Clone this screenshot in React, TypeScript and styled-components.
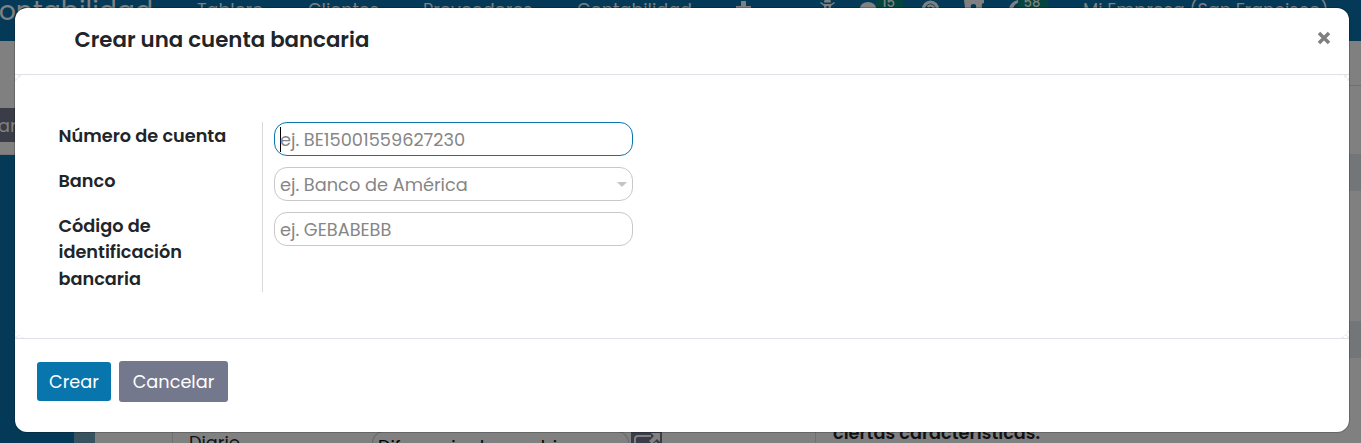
import React from "react";
import styled, { createGlobalStyle } from "styled-components";

const GlobalStyle = createGlobalStyle`
  * { box-sizing: border-box; }
  html, body { margin: 0; height: 100%; overflow: hidden; }
  body { font-family: Poppins, Inter, "Noto Sans", sans-serif; font-size: 17.7px; color: #212529; }
`;

const Page = styled.div`
  position: relative;
  width: 1361px;
  height: 443px;
  overflow: hidden;
  background: #808080;
  display: flex;
  flex-direction: column;
`;

const Navbar = styled.nav`
  height: 41px;
  flex: none;
  display: flex;
  align-items: flex-start;
  background: #043a57;
  color: #808080;
  font-size: 17.6px;
`;

const Brand = styled.div`
  width: 197px;
  margin-left: -22px;
  margin-right: 22px;
  flex: none;
  font-size: 26.8px;
  line-height: 36px;
  margin-top: -7px;
  white-space: nowrap;
`;

const NavItem = styled.div<{ $w: number }>`
  width: ${(p) => p.$w}px;
  flex: none;
  line-height: 20px;
  white-space: nowrap;
`;

const NavIcon = styled.svg<{ $w: number }>`
  width: ${(p) => p.$w}px;
  height: 24px;
  flex: none;
`;

const Badge = styled.div<{ $w: number; $gap: number }>`
  width: ${(p) => p.$w}px;
  margin-right: ${(p) => p.$gap}px;
  height: 9px;
  flex: none;
  padding-right: 2px;
  background: #04443f;
  font-size: 13.2px;
  font-weight: 500;
  line-height: 5px;
  text-align: center;
`;

const ControlPanel = styled.div`
  height: 114px;
  flex: none;
  display: flex;
  justify-content: space-between;
  align-items: flex-start;
  padding-top: 67px;
  border-bottom: 1px solid #747474;
`;

const EditButton = styled.div`
  width: 40px;
  height: 34px;
  margin-left: -2px;
  line-height: 35px;
  background: #3a3c47;
  color: #808080;
`;

const PanelRule = styled.div`
  width: 20px;
  height: 1px;
  margin-top: -23px;
  background: #707070;
`;

const Content = styled.div`
  flex: 1;
  display: flex;
`;

const Sidebar = styled.div`
  width: 95px;
  background: #043a57;
  border-right: 21px solid #395260;
`;

const Sheet = styled.div`
  width: 1246px;
  display: flex;
  align-items: flex-end;
  padding-left: 77px;
`;

const SheetLabel = styled.div`
  width: 200px;
  height: 12px;
  padding-left: 16px;
  border-left: 1px solid #707070;
  line-height: 24px;
  color: #101214;
`;

const SheetField = styled.div`
  width: 257px;
  height: 12px;
  border: 1px solid #686868;
  border-bottom: 0;
  border-radius: 14px 14px 0 0;
  padding-left: 5px;
  line-height: 29px;
  color: #000;
  white-space: nowrap;
  overflow: hidden;
`;

const LinkButton = styled.div`
  width: 31px;
  height: 12px;
  margin-left: 2px;
  background: #3a3c47;
  svg { display: block; }
`;

const SheetNote = styled.div`
  height: 12px;
  margin-left: 153px;
  padding-left: 17px;
  border-left: 1px solid #707070;
  line-height: 3px;
  font-weight: 600;
  color: #101214;
  white-space: nowrap;
`;

const Rows = styled.div`
  width: 20px;
  margin-top: -1px;
  display: flex;
  flex-direction: column;
  gap: 130px;
`;

const GroupBand = styled.div`
  height: 37px;
  background: #737678;
`;

const Dialog = styled.section`
  position: absolute;
  left: 15px;
  top: 8px;
  width: 1334px;
  height: 424px;
  border-radius: 12px;
  background: #fff;
  box-shadow: 0 0 0 1px rgba(0, 0, 0, 0.2);
  display: flex;
  flex-direction: column;
`;

const Header = styled.header`
  height: 67px;
  flex: none;
  display: flex;
  justify-content: space-between;
  padding: 15px 18px 0 59.4px;
  border-bottom: 1px solid #dee2e6;
`;

const Title = styled.h4`
  margin: 0;
  font-size: 21.3px;
  font-weight: 600;
  line-height: 33px;
`;

const CloseIcon = styled.svg`
  width: 14px;
  height: 14px;
  margin-top: 7.5px;
`;

const Body = styled.main`
  height: 264px;
  flex: none;
  border-bottom: 1px solid #dee2e6;
  background: repeating-conic-gradient(#f0f0f0 0 25%, #fff 0 50%) 0 0 / 6px 6px;
`;

const BodyInner = styled.div`
  height: 263px;
  padding: 47px 43px 0;
  border-radius: 12px;
  background: #fff;
`;

const Form = styled.div`
  display: flex;
`;

const Labels = styled.div`
  width: 205px;
  height: 170px;
  padding: 1px 0 0 0.5px;
  display: flex;
  flex-direction: column;
  gap: 18.6px;
  border-right: 1px solid #d9d9d9;
`;

const Label = styled.label`
  font-weight: 600;
  line-height: 26.4px;
  white-space: nowrap;
`;

const Fields = styled.div`
  width: 359px;
  margin-left: 11px;
  display: flex;
  flex-direction: column;
  gap: 11px;
`;

const Field = styled.div<{ $focus?: boolean }>`
  height: 34px;
  display: flex;
  align-items: center;
  padding: 0 5px;
  border: 1px solid ${(p) => (p.$focus ? "#0875ad" : "#c8c8c8")};
  border-radius: 13px;
  color: #868686;
  font-size: 17.75px;
  line-height: 27px;
`;

const Caret = styled.span`
  width: 1px;
  height: 25px;
  margin-right: -1px;
  background: #000;
`;

const Arrow = styled.svg`
  width: 10px;
  height: 5px;
  margin-left: auto;
`;

const Footer = styled.footer`
  flex: 1;
  display: flex;
  align-items: center;
  gap: 8px;
  padding: 0 22px 8px;
`;

const Button = styled.button<{ $primary?: boolean }>`
  width: ${(p) => (p.$primary ? 74 : 109)}px;
  height: ${(p) => (p.$primary ? 39 : 41)}px;
  padding: 0;
  border: 0;
  border-radius: 3px;
  background: ${(p) => (p.$primary ? "#0875ad" : "#74788d")};
  color: #fff;
  font: inherit;
`;

export default function App() {
  return (
    <Page>
      <GlobalStyle />
      <Navbar>
        <Brand>Contabilidad</Brand>
        <NavItem $w={111}>Tablero</NavItem>
        <NavItem $w={115}>Clientes</NavItem>
        <NavItem $w={154}>Proveedores</NavItem>
        <NavItem $w={159}>Contabilidad</NavItem>
        <NavIcon $w={84} viewBox="0 0 84 24">
          <path d="M5 1h5v5h5v4h-5v5H5v-5H0V6h5z" fill="#808080" />
        </NavIcon>
        <NavIcon $w={56} viewBox="820 0 56 24">
          <path d="M824 2.5q0-3.5 3.5-3.5t3.5 3.5z" fill="#808080" />
          <path d="M820.5 2.5l3.5 2.5h7l3.5-2.5" stroke="#808080" strokeWidth="1.5" fill="none" />
          <path d="M824 4h7v5h-2.5V6h-2v3H824z" fill="#808080" />
          <ellipse cx="868" cy="8" rx="8" ry="6" fill="#808080" />
        </NavIcon>
        <Badge $w={27} $gap={16}>15</Badge>
        <NavIcon $w={99} viewBox="919 0 99 24">
          <circle cx="930.5" cy="9" r="7" fill="none" stroke="#808080" strokeWidth="3.2" />
          <path d="M927.5 7q3-3 6 0v2" fill="none" stroke="#808080" strokeWidth="2.4" />
          <path d="M964 0h20v3q-3 0-2 5h-6q1-4-2.5-4T971 8h-6z" fill="#808080" />
          <path d="M1009 9q1-7 9-9v3q-4 1-5 6z" fill="#808080" />
        </NavIcon>
        <Badge $w={30} $gap={35}>58</Badge>
        <NavItem $w={260}>Mi Empresa (San Francisco)</NavItem>
      </Navbar>
      <ControlPanel>
        <EditButton>ar</EditButton>
        <PanelRule />
      </ControlPanel>
      <Content>
        <Sidebar />
        <Sheet>
          <SheetLabel>Diario</SheetLabel>
          <SheetField>Diferencia de cambio</SheetField>
          <LinkButton>
            <svg width="31" height="12" viewBox="0 0 31 12">
              <path d="M20 5H7q-3 0-3 3v5M25 11v2" fill="none" stroke="#808080" strokeWidth="2" />
              <path d="M20 2h9v9l-3-3-5 5-3-3 5-5z" fill="#808080" />
            </svg>
          </LinkButton>
          <SheetNote>ciertas características.</SheetNote>
        </Sheet>
        <Rows>
          <GroupBand />
          <GroupBand />
        </Rows>
      </Content>
      <Dialog>
        <Header>
          <Title>Crear una cuenta bancaria</Title>
          <CloseIcon viewBox="0 0 14 14">
            <path d="m2 2 10 10M12 2 2 12" stroke="#7f7f7f" strokeWidth="3.5" />
          </CloseIcon>
        </Header>
        <Body>
          <BodyInner>
            <Form>
              <Labels>
                <Label>Número de cuenta</Label>
                <Label>Banco</Label>
                <Label>Código de<br />identificación<br />bancaria</Label>
              </Labels>
              <Fields>
                <Field $focus><Caret />ej. BE15001559627230</Field>
                <Field>
                  ej. Banco de América
                  <Arrow viewBox="0 0 10 5"><path d="M0 0h10L5 5z" fill="#c4c4c4" /></Arrow>
                </Field>
                <Field>ej. GEBABEBB</Field>
              </Fields>
            </Form>
          </BodyInner>
        </Body>
        <Footer>
          <Button $primary>Crear</Button>
          <Button>Cancelar</Button>
        </Footer>
      </Dialog>
    </Page>
  );
}
